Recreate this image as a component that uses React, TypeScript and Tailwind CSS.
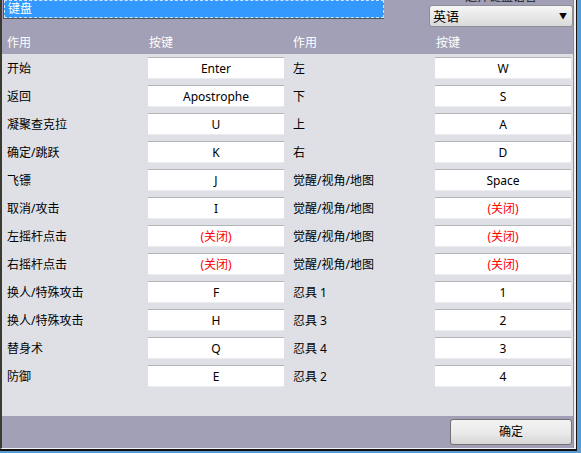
import React from "react";

type Row = { a: string; ka: string; b: string; kb: string };

const rows: Row[] = [
  { a: "开始", ka: "Enter", b: "左", kb: "W" },
  { a: "返回", ka: "Apostrophe", b: "下", kb: "S" },
  { a: "凝聚查克拉", ka: "U", b: "上", kb: "A" },
  { a: "确定/跳跃", ka: "K", b: "右", kb: "D" },
  { a: "飞镖", ka: "J", b: "觉醒/视角/地图", kb: "Space" },
  { a: "取消/攻击", ka: "I", b: "觉醒/视角/地图", kb: "(关闭)" },
  { a: "左摇杆点击", ka: "(关闭)", b: "觉醒/视角/地图", kb: "(关闭)" },
  { a: "右摇杆点击", ka: "(关闭)", b: "觉醒/视角/地图", kb: "(关闭)" },
  { a: "换人/特殊攻击", ka: "F", b: "忍具 1", kb: "1" },
  { a: "换人/特殊攻击", ka: "H", b: "忍具 3", kb: "2" },
  { a: "替身术", ka: "Q", b: "忍具 4", kb: "3" },
  { a: "防御", ka: "E", b: "忍具 2", kb: "4" },
];

function KeyBox({ value }: { value: string }) {
  const off = value === "(关闭)";
  return (
    <div
      className={
        "flex h-[22px] items-center justify-center border-t border-[#b3b3b8] border-b border-b-[#ececf0] bg-white " +
        (off ? "text-[#ff0000]" : "text-black")
      }
    >
      {value}
    </div>
  );
}

export default function App() {
  return (
    <div
      className="h-[453px] w-[581px] overflow-hidden bg-[#5b9bcf] text-[12px] leading-[17px]"
      style={{ fontFamily: '"Noto Sans", "Noto Sans CJK SC", sans-serif' }}
    >
      <div className="h-[451px] w-[577px] border-b-2 border-r border-[#111]">
        <div className="flex h-[449px] w-[576px] border-b border-l-2 border-r-2 border-b-[#f4f4f4] border-l-[#3b3a2e] border-r-[#f0f0f2]">
          <div className="flex w-[571px] flex-col bg-[#a1a0b6]">
            {/* top: list + language combo */}
            <div className="flex h-[28px] items-start">
              <div className="relative ml-[1px] h-[19px] w-[381px] border-b border-l border-[#555] bg-[#3399ff]">
                <div className="h-[18px] border border-dashed border-[#cfe6ff] pl-[3px] leading-[16px] text-white">键盘</div>
              </div>
              <div className="ml-[45px] flex w-[144px] flex-col">
                <div className="h-[5px] overflow-hidden">
                  <div className="-mt-[12px] text-center text-[#222]">选择键盘语言</div>
                </div>
                <div className="flex h-[22px] items-center justify-between rounded-[3px] border border-[#8e8e94] bg-gradient-to-b from-[#f6f6f6] to-[#dadada] pl-[3px] pr-[5px] text-black">
                  <span className="text-[13px]">英语</span>
                  <span className="text-[8px] leading-none">▼</span>
                </div>
              </div>
            </div>
            {/* header */}
            <div className="grid h-[26px] grid-cols-[141px_136px_151px_136px] items-end pb-[3px] pl-[5px] text-white">
              <div>作用</div>
              <div className="pl-[1px]">按键</div>
              <div className="pl-[9px]">作用</div>
              <div className="pl-[1px]">按键</div>
            </div>
            {/* content */}
            <div className="flex h-[362px] flex-col gap-[6px] bg-[#dfe0e5] pl-[5px] pt-[3px] text-black">
              {rows.map((r, i) => (
                <div key={i} className="grid grid-cols-[141px_136px_151px_136px] items-center">
                  <div>{r.a}</div>
                  <KeyBox value={r.ka} />
                  <div className="pl-[9px]">{r.b}</div>
                  <KeyBox value={r.kb} />
                </div>
              ))}
            </div>
            {/* footer */}
            <div className="flex h-[31px] items-center justify-end pr-[1px]">
              <button
                type="button"
                className="flex h-[26px] w-[122px] items-center justify-center rounded-[3px] border border-[#707070] bg-gradient-to-b from-[#f3f3f3] via-[#ebebeb] to-[#d6d6d6] text-black"
              >
                确定
              </button>
            </div>
          </div>
        </div>
      </div>
    </div>
  );
}
